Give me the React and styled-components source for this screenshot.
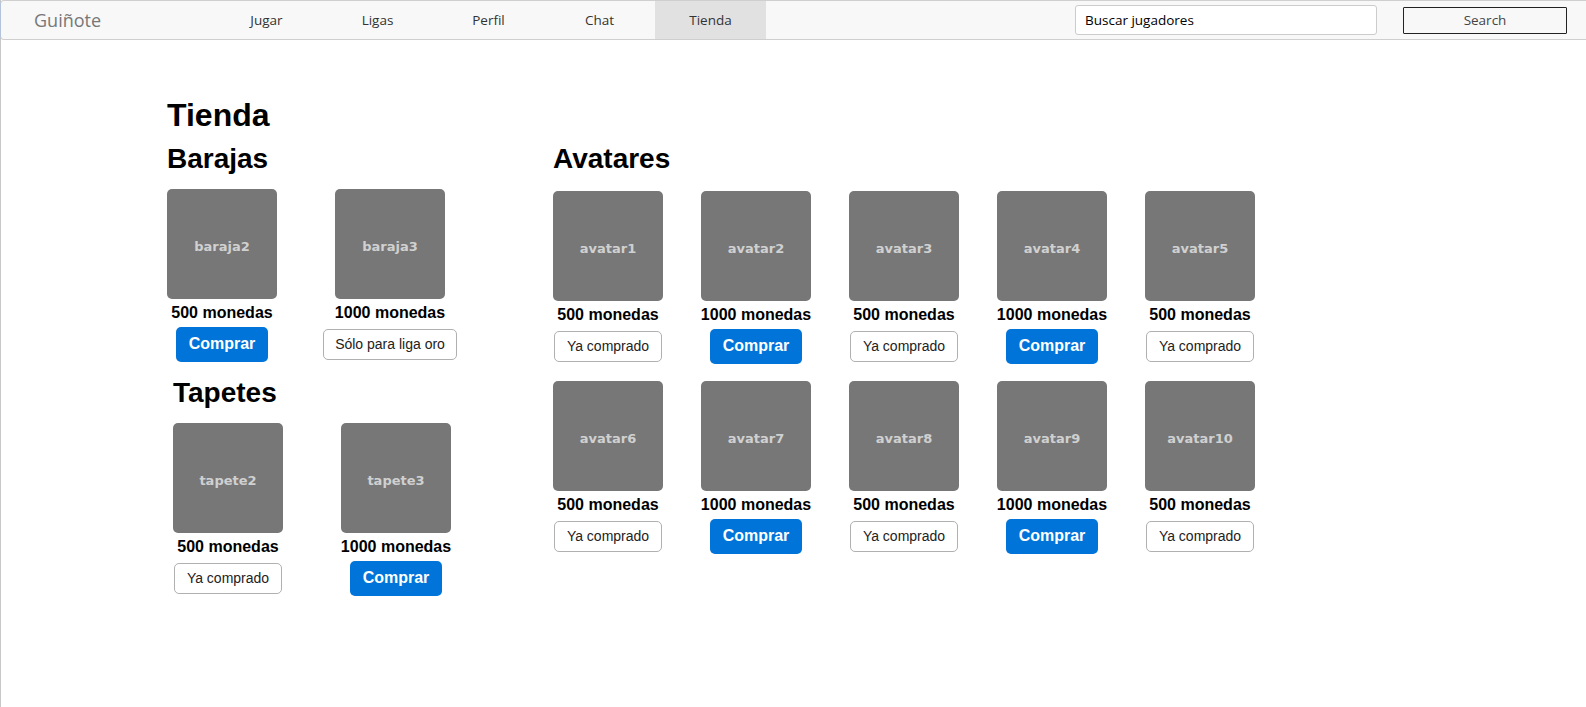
import React from "react";
import styled, { createGlobalStyle } from "styled-components";

const GlobalStyle = createGlobalStyle`
  html, body {
    margin: 0;
    padding: 0;
    background: #fff;
    font-family: "Liberation Sans", Arial, sans-serif;
  }
`;

const barajas = [
    { id: "baraja2", price: 500, state: "buy" },
    { id: "baraja3", price: 1000, state: "locked" },
];

const tapetes = [
    { id: "tapete2", price: 500, state: "owned" },
    { id: "tapete3", price: 1000, state: "buy" },
];

const avatares = [
    { id: "avatar1", price: 500, state: "owned" },
    { id: "avatar2", price: 1000, state: "buy" },
    { id: "avatar3", price: 500, state: "owned" },
    { id: "avatar4", price: 1000, state: "buy" },
    { id: "avatar5", price: 500, state: "owned" },
    { id: "avatar6", price: 500, state: "owned" },
    { id: "avatar7", price: 1000, state: "buy" },
    { id: "avatar8", price: 500, state: "owned" },
    { id: "avatar9", price: 1000, state: "buy" },
    { id: "avatar10", price: 500, state: "owned" },
];

const links = ["Jugar", "Ligas", "Perfil", "Chat", "Tienda"];

function Item({ item }) {
    return (
        <Card>
            <Picture role="img" aria-label={item.id}>{item.id}</Picture>
            <Price>{item.price} monedas</Price>
            <Actions>
                {item.state === "buy" && <BuyButton>Comprar</BuyButton>}
                {item.state === "owned" && <GhostButton>Ya comprado</GhostButton>}
                {item.state === "locked" && <GhostButton>Sólo para liga oro</GhostButton>}
            </Actions>
        </Card>
    );
}

export default function App() {
    return (
        <>
            <GlobalStyle />
            <Page>
                <Navbar>
                    <Brand>Guiñote</Brand>
                    <NavList>
                        {links.map((l) => (
                            <NavLink key={l} $active={l === "Tienda"}>{l}</NavLink>
                        ))}
                    </NavList>
                    <SearchForm onSubmit={(e) => e.preventDefault()}>
                        <SearchInput type="text" defaultValue="Buscar jugadores" />
                        <SearchButton type="submit">Search</SearchButton>
                    </SearchForm>
                </Navbar>

                <Main>
                    <LeftCol>
                        <Title>Tienda</Title>
                        <Section>
                            <SectionTitle>Barajas</SectionTitle>
                            <CardRow>
                                {barajas.map((b) => <Item key={b.id} item={b} />)}
                            </CardRow>
                        </Section>
                        <Section $shift>
                            <SectionTitle $gap>Tapetes</SectionTitle>
                            <CardRow>
                                {tapetes.map((t) => <Item key={t.id} item={t} />)}
                            </CardRow>
                        </Section>
                    </LeftCol>
                    <RightCol>
                        <SectionTitle $top>Avatares</SectionTitle>
                        <AvatarGrid>
                            {avatares.map((a) => <Item key={a.id} item={a} />)}
                        </AvatarGrid>
                    </RightCol>
                </Main>
            </Page>
        </>
    );
}

const Page = styled.div`
    min-height: 100vh;
    border-left: 1px solid #c8c8c8;
    box-sizing: border-box;
`;

const Navbar = styled.nav`
    display: flex;
    align-items: stretch;
    height: 40px;
    box-sizing: border-box;
    margin-left: -1px;
    background: #f8f8f8;
    border: 1px solid #cfcfcf;
    border-left-color: #b3c3da;
    border-right: none;
    border-radius: 4px 0 0 4px;
    font-family: "Open Sans", "Liberation Sans", sans-serif;
`;

const Brand = styled.a`
    display: flex;
    align-items: center;
    width: 177px;
    padding-left: 33px;
    font-size: 18px;
    color: #777;
    text-decoration: none;
`;

const NavList = styled.div`
    display: flex;
`;

const NavLink = styled.a`
    display: flex;
    align-items: center;
    justify-content: center;
    width: 111px;
    font-size: 13.5px;
    color: #333;
    background: ${(p) => (p.$active ? "#e1e1e1" : "transparent")};
    cursor: pointer;
`;

const SearchForm = styled.form`
    display: flex;
    align-items: center;
    margin-left: auto;
    padding-right: 19px;
`;

const SearchInput = styled.input`
    width: 302px;
    height: 30px;
    box-sizing: border-box;
    padding: 0 9px;
    border: 1px solid #ccc;
    border-radius: 3px;
    background: #fff;
    font-family: "Open Sans", "Liberation Sans", sans-serif;
    font-size: 13.5px;
    color: #000;
    outline: none;
`;

const SearchButton = styled.button`
    width: 164px;
    height: 27px;
    margin-left: 26px;
    border: 1px solid #222;
    border-radius: 1px;
    background: transparent;
    font-family: "Open Sans", "Liberation Sans", sans-serif;
    font-size: 13.5px;
    color: #444;
    cursor: pointer;
`;

const Main = styled.main`
    display: flex;
    padding: 57px 0 0 166px;
`;

const LeftCol = styled.div`
    width: 386px;
    flex-shrink: 0;
`;

const RightCol = styled.div`
    display: flex;
    flex-direction: column;
`;

const Title = styled.h1`
    margin: 0;
    font-size: 32px;
    font-weight: bold;
    line-height: normal;
    color: #000;
`;

const Section = styled.section`
    margin-left: ${(p) => (p.$shift ? "6px" : "0")};
`;

const SectionTitle = styled.h2`
    margin: ${(p) => (p.$top ? "46px" : p.$gap ? "11px" : "9px")} 0 0;
    font-size: 28px;
    font-weight: bold;
    line-height: normal;
    color: #000;
`;

const CardRow = styled.div`
    display: flex;
    gap: 58px;
    margin-top: 14px;
`;

const AvatarGrid = styled.div`
    display: grid;
    grid-template-columns: repeat(5, 110px);
    column-gap: 38px;
    row-gap: 13px;
    margin-top: 16px;
`;

const Card = styled.div`
    display: flex;
    flex-direction: column;
    align-items: center;
    width: 110px;
`;

const Picture = styled.div`
    display: flex;
    align-items: center;
    justify-content: center;
    width: 110px;
    height: 110px;
    box-sizing: border-box;
    padding-top: 5px;
    border-radius: 5px;
    background: #777;
    font-family: "DejaVu Sans", "Noto Sans", sans-serif;
    font-weight: bold;
    font-size: 13px;
    color: #d0d0d0;
`;

const Price = styled.div`
    margin-top: 5px;
    font-size: 16px;
    font-weight: bold;
    line-height: normal;
    white-space: nowrap;
    color: #000;
`;

const Actions = styled.div`
    display: flex;
    align-items: center;
    justify-content: center;
    height: 44px;
`;

const BuyButton = styled.button`
    height: 35px;
    padding: 0 12.6px;
    border: none;
    border-radius: 5px;
    background: #0074d9;
    color: #fff;
    font-family: "Liberation Sans", Arial, sans-serif;
    font-size: 16px;
    font-weight: bold;
    white-space: nowrap;
    cursor: pointer;
`;

const GhostButton = styled.button`
    height: 31px;
    padding: 0 11.5px;
    border: 1px solid #b0b0b0;
    border-radius: 5px;
    background: #fff;
    color: #222;
    font-family: "Liberation Sans", Arial, sans-serif;
    font-size: 14px;
    white-space: nowrap;
    cursor: pointer;
`;
